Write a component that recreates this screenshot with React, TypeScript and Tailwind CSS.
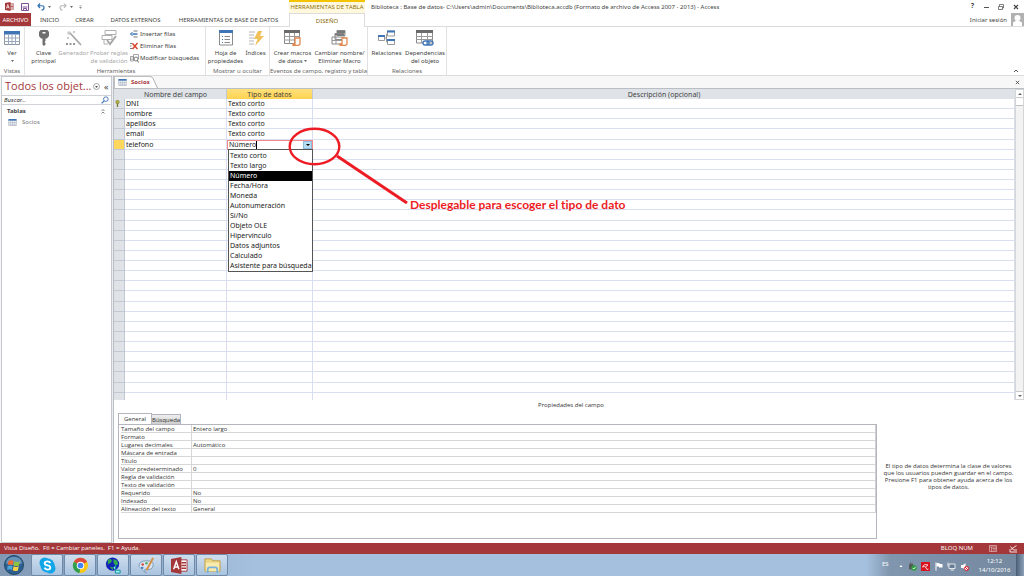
import { useState } from 'react';
import type { ReactNode } from 'react';

const fields = [
  { name: 'DNI', type: 'Texto corto', key: true },
  { name: 'nombre', type: 'Texto corto' },
  { name: 'apellidos', type: 'Texto corto' },
  { name: 'email', type: 'Texto corto' },
];

const dataTypes = [
  'Texto corto',
  'Texto largo',
  'Número',
  'Fecha/Hora',
  'Moneda',
  'Autonumeración',
  'Sí/No',
  'Objeto OLE',
  'Hipervínculo',
  'Datos adjuntos',
  'Calculado',
  'Asistente para búsqueda',
];

const properties = [
  ['Tamaño del campo', 'Entero largo'],
  ['Formato', ''],
  ['Lugares decimales', 'Automático'],
  ['Máscara de entrada', ''],
  ['Título', ''],
  ['Valor predeterminado', '0'],
  ['Regla de validación', ''],
  ['Texto de validación', ''],
  ['Requerido', 'No'],
  ['Indexado', 'No'],
  ['Alineación del texto', 'General'],
];

/* ---------- Iconos ---------- */

function AccessIcon({ className }: { className: string }) {
  return (
    <svg viewBox="0 0 18 18" className={className}>
      <path d="M10 3h7v12h-7z" fill="#fff" stroke="#a4373a" />
      <path d="M11 6h5M11 9h5M11 12h5" stroke="#a4373a" strokeWidth="1.6" />
      <path d="M0 2 11 0v18L0 16z" fill="#a4373a" />
      <path d="M2.8 13 5.6 5l2.8 8M3.8 10.6h3.6" fill="none" stroke="#fff" strokeWidth="1.5" />
    </svg>
  );
}

function TableIcon({ className }: { className: string }) {
  return (
    <svg viewBox="0 0 16 14" className={className}>
      <path d="M.5.5h15v13H.5z" fill="#fff" stroke="#8a93a3" />
      <path d="M0 0h16v3.500H0z" fill="#3f74b5" />
      <path d="M4.5 3.500V14M8 3.500V14M11.5 3.500V14M0 7h16M0 10.500h16" stroke="#9aa7bb" />
    </svg>
  );
}

function KeyIcon() {
  return (
    <svg viewBox="0 0 16 16" className="h-4 w-4">
      <path d="M4.500 0h7L13 2v4l-2 2.500H5L3 6V2z" fill="#6e6e6e" />
      <path d="M6.500 8h3v3l-1 1 1 1v1.500L8 16l-1.500-1.500z" fill="#6e6e6e" />
      <path d="M6.500 2h3v1.500h-3z" fill="#fff" />
    </svg>
  );
}

function WandIcon() {
  return (
    <svg viewBox="0 0 16 16" className="h-4 w-4">
      <path d="m4 3 11 12" stroke="#a8a8a8" strokeWidth="1.800" />
      <path d="M3 1v4M1 3h4M8 1v2M2 7v2M7 2h2M1 8h2" stroke="#b8b8b8" />
      <path d="M0 14h2M3.500 14h2M7 14h2" stroke="#777" strokeWidth="1.500" />
    </svg>
  );
}

function CheckRulesIcon() {
  return (
    <svg viewBox="0 0 16 16" className="h-4 w-4">
      <path d="M4 .5h11v4H4zM1 5.500h10v4H1z" fill="#fff" stroke="#b0b0b0" />
      <path d="M3 10v4h4" fill="none" stroke="#b0b0b0" />
      <path d="m6 10 3 4 6-8" fill="none" stroke="#a8a8a8" strokeWidth="2" />
    </svg>
  );
}

function InsertRowsIcon() {
  return (
    <svg viewBox="0 0 16 16" className="h-2 w-2">
      <path d="M7 2h8M7 14h8" stroke="#777" strokeWidth="2" />
      <path d="M6 8h9" stroke="#3f74b5" strokeWidth="3" />
      <path d="M5 4 1 8l4 4M1 8h5" fill="none" stroke="#3f74b5" strokeWidth="2" />
    </svg>
  );
}

function DeleteRowsIcon() {
  return (
    <svg viewBox="0 0 16 16" className="h-2 w-2">
      <path d="M0 3h5M0 8h3M0 13h5" stroke="#777" strokeWidth="2" />
      <path d="m5 3 10 11M15 2 5 14" stroke="#d8432b" strokeWidth="3" />
    </svg>
  );
}

function LookupIcon() {
  return (
    <svg viewBox="0 0 18 18" className="h-[9px] w-[9px]">
      <path d="M1 5h6v9H1zM7 1h10v9H7z" fill="#fff" stroke="#888" strokeWidth="1.500" />
      <path d="M1 8h5M1 11h5" stroke="#888" />
      <circle cx="12" cy="10" r="4" fill="#fff" stroke="#555" strokeWidth="1.500" />
      <path d="m14.500 13 3 4" stroke="#555" strokeWidth="2" />
    </svg>
  );
}

function SheetIcon() {
  return (
    <svg viewBox="0 0 14 16" className="h-4 w-[14px]">
      <path d="M.5.5h13v14.500H.5z" fill="#fff" stroke="#8b8b8b" />
      <path d="M0 0h14v3H0z" fill="#3f74b5" />
      <path d="M5.500 6.500H11M5.500 9.500H11M5.500 12.500H11" stroke="#8b8b8b" />
      <path d="M3 6.500h1M3 9.500h1M3 12.500h1" stroke="#3f74b5" />
    </svg>
  );
}

function IndexIcon() {
  return (
    <svg viewBox="0 0 16 16" className="h-4 w-4">
      <path d="M1 2h6M1 5h5M1 8h5M1 11h5M1 14h5" stroke="#b3b3b3" />
      <path d="M10 1h4l-2 5h4L7 16l2.500-7H6z" fill="#f0c05a" />
    </svg>
  );
}

function MacroIcon() {
  return (
    <svg viewBox="0 0 17 16" className="h-4 w-[17px]">
      <path d="M.5.5h15v13H.5z" fill="#fff" stroke="#888" />
      <path d="M0 0h16v3H0z" fill="#6a6a6a" />
      <path d="M5.500 3v11M10.500 3v11M0 6.500h16M0 10h16" stroke="#999" />
      <path d="M11 8h5v6l-1.500 1.500H9V14h2z" fill="#fff" stroke="#e2884f" strokeWidth="1.300" />
    </svg>
  );
}

function RenameMacroIcon() {
  return (
    <svg viewBox="0 0 17 16" className="h-4 w-[17px]">
      <path d="M6 .5h8v5H6zM4 3.500h9v6H4zM1 7h11v7H1z" fill="#fff" stroke="#888" />
      <path d="M6 1h8v2H6zM4 4h9v1.500H4z" fill="#777" />
      <path d="M1 10.500h11M5 7v7" stroke="#999" />
      <path d="M11 8h5v6l-1.500 1.500H9V14h2z" fill="#fff" stroke="#e2884f" strokeWidth="1.300" />
    </svg>
  );
}

function RelationsIcon() {
  return (
    <svg viewBox="0 0 17 16" className="h-4 w-[17px]">
      <path d="M.5 5.500h6v5h-6zM9.500 1h7v5h-7zM9.500 9.500h7v5h-7z" fill="#fff" stroke="#999" />
      <path d="M0 5h7v2H0zM9 .5h8v2H9zM9 9h8v2H9z" fill="#3f74b5" />
      <path d="M7 8h1.500V4H10M8.500 8v4H10" fill="none" stroke="#999" />
    </svg>
  );
}

function DependenciesIcon() {
  return (
    <svg viewBox="0 0 18 16" className="h-4 w-[18px]">
      <path d="M.5.5h16v12.500H.5z" fill="#fff" stroke="#888" />
      <path d="M0 0h17v3H0z" fill="#6a6a6a" />
      <path d="M5.500 3v10M11.500 3v10M0 6.500h17M0 9.500h17" stroke="#999" />
      <rect x="7" y="11" width="6" height="4" rx="2" fill="#fff" stroke="#3f74b5" strokeWidth="1.300" />
      <rect x="11" y="11" width="6" height="4" rx="2" fill="none" stroke="#3f74b5" strokeWidth="1.300" />
    </svg>
  );
}

/* ---------- Cinta de opciones ---------- */

function RibbonGroup({ label, className, children }: { label: string; className: string; children: ReactNode }) {
  return (
    <section className={`flex shrink-0 flex-col justify-between border-r border-[#e1e1e1] ${className}`}>
      <div className="flex h-[38px] justify-center">{children}</div>
      <h2 className="whitespace-nowrap text-center text-[6px] leading-[7px] text-[#666]">{label}</h2>
    </section>
  );
}

function RibbonButton({
  icon,
  lines,
  className,
  disabled,
}: {
  icon: ReactNode;
  lines: string[];
  className: string;
  disabled?: boolean;
}) {
  return (
    <button
      type="button"
      disabled={disabled}
      className={`flex shrink-0 flex-col items-center whitespace-nowrap text-[6px] leading-[8px] ${
        disabled ? 'text-[#a6a6a6]' : 'text-[#444]'
      } ${className}`}
    >
      <span className="mt-[3px] mb-[3px] flex h-4 justify-center">{icon}</span>
      {lines.map((line) => (
        <span key={line} className="flex h-2 items-center gap-px">
          {line === '▾' ? <DownArrow /> : line.replace(' ▾', '')}
          {line.endsWith(' ▾') && <DownArrow />}
        </span>
      ))}
    </button>
  );
}

function DownArrow() {
  return (
    <svg viewBox="0 0 6 4" className="h-[2px] w-[3px]">
      <path d="M0 0h6L3 4z" fill="#666" />
    </svg>
  );
}

function TitleBar() {
  return (
    <header className="flex h-[13px] items-stretch bg-white text-[6px] text-[#444]">
      <div className="flex w-[289px] shrink-0 items-center pl-[5px]">
        <AccessIcon className="h-[9px] w-[9px]" />
        <button type="button" aria-label="Guardar" className="ml-[7px]">
          <svg viewBox="0 0 16 16" className="h-2 w-2">
            <path d="M1 1h14v14H1z" fill="#fff" stroke="#80509a" strokeWidth="2" />
            <path d="M3 8h10M5 15v-4h6v4" fill="none" stroke="#80509a" strokeWidth="2" />
          </svg>
        </button>
        <button type="button" aria-label="Deshacer" className="ml-2 flex items-center gap-[3px]">
          <svg viewBox="0 0 16 16" className="h-2 w-2">
            <path d="M6 1 2 5.500 6 10M2 5.500h8q4 0 4 4t-5 5" fill="none" stroke="#2f6fb3" strokeWidth="2.400" />
          </svg>
          <DownArrow />
        </button>
        <button type="button" aria-label="Rehacer" className="ml-2 flex items-center gap-[3px]">
          <svg viewBox="0 0 16 16" className="h-2 w-2">
            <path d="m10 1 4 4.500L10 10M14 5.500H6q-4 0-4 4t5 5" fill="none" stroke="#b5b5b5" strokeWidth="2.200" />
          </svg>
          <DownArrow />
        </button>
        <button type="button" aria-label="Personalizar barra" className="ml-[6px]">
          <svg viewBox="0 0 6 8" className="h-1 w-[3px]">
            <path d="M1 1h4M1 4h4L3 7z" fill="#888" stroke="#888" />
          </svg>
        </button>
      </div>
      <div className="w-[76px] shrink-0 overflow-hidden whitespace-nowrap border-t-2 border-[#f5c400] bg-[#fff8dc] text-center leading-[10px] text-[#8a6a00] font-['Open_Sans',sans-serif]">
        HERRAMIENTAS DE TABLA
      </div>
      <h1 className="min-w-0 flex-1 truncate pl-[6px] leading-[14px]">
        Biblioteca : Base de datos- C:\Users\admin\Documents\Biblioteca.accdb (Formato de archivo de Access 2007 - 2013) -
        Access
      </h1>
      <div className="flex items-center gap-[9px] pr-[5px]">
        <button type="button" className="text-[7px] font-bold">?</button>
        <button type="button" aria-label="Minimizar">
          <svg viewBox="0 0 6 6" className="h-[6px] w-[6px]">
            <path d="M1 3.500h5" stroke="#555" />
          </svg>
        </button>
        <button type="button" aria-label="Restaurar">
          <svg viewBox="0 0 12 12" className="h-[6px] w-[6px]">
            <path d="M1 5h8v6H1zM3 5V1h8v7H9" fill="none" stroke="#555" strokeWidth="1.500" />
          </svg>
        </button>
        <button type="button" aria-label="Cerrar">
          <svg viewBox="0 0 6 6" className="h-[6px] w-[6px]">
            <path d="m1 1 4 4M5 1 1 5" stroke="#444" strokeWidth="1.200" />
          </svg>
        </button>
      </div>
    </header>
  );
}

function RibbonTabs() {
  return (
    <nav className="flex h-[14px] items-stretch text-[6px] leading-[14px] whitespace-nowrap text-[#444]">
      <div className="flex w-[289px] shrink-0 border-b border-[#dcdcdc]">
        <button type="button" className="w-[31px] bg-[#a4373a] text-white">ARCHIVO</button>
        <button type="button" className="w-[37px]">INICIO</button>
        <button type="button" className="w-[33px]">CREAR</button>
        <button type="button" className="w-[69px]">DATOS EXTERNOS</button>
        <button type="button" className="w-[117px]">HERRAMIENTAS DE BASE DE DATOS</button>
      </div>
      <button
        type="button"
        className="w-[76px] shrink-0 border-x border-t border-[#dcdcdc] bg-white leading-[12px] text-[#8a6a00]"
      >
        DISEÑO
      </button>
      <div className="flex flex-1 items-stretch justify-end gap-1 border-b border-[#dcdcdc]">
        <a href="#cuenta">Iniciar sesión</a>
        <svg viewBox="0 0 13 13" className="h-[13px] w-[13px]">
          <path d="M0 0h13v13H0z" fill="#b1b1b1" />
          <circle cx="6.500" cy="5" r="3" fill="#fff" />
          <path d="M2 13V9.500l2.500-1.500h4L11 9.500V13z" fill="#fff" />
        </svg>
      </div>
    </nav>
  );
}

function Ribbon() {
  return (
    <div className="flex h-[49px] items-stretch border-b border-[#dcdcdc] bg-white">
      <RibbonGroup label="Vistas" className="w-[25px]">
        <RibbonButton icon={<TableIcon className="h-4 w-4" />} lines={['Ver', '▾']} className="w-6" />
      </RibbonGroup>
      <RibbonGroup label="Herramientas" className="w-[181px] pl-[2px]">
        <RibbonButton icon={<KeyIcon />} lines={['Clave', 'principal']} className="w-[29px]" />
        <RibbonButton icon={<WandIcon />} lines={['Generador']} className="w-[31px]" disabled />
        <RibbonButton icon={<CheckRulesIcon />} lines={['Probar reglas', 'de validación']} className="w-10" disabled />
        <div className="flex w-[74px] flex-col pt-px pl-px text-[6px] leading-[12px] whitespace-nowrap text-[#444]">
          <button type="button" className="flex h-3 items-center gap-[2px]">
            <InsertRowsIcon />
            Insertar filas
          </button>
          <button type="button" className="flex h-3 items-center gap-[2px]">
            <DeleteRowsIcon />
            Eliminar filas
          </button>
          <button type="button" className="flex h-3 items-center gap-px">
            <LookupIcon />
            Modificar búsquedas
          </button>
        </div>
      </RibbonGroup>
      <RibbonGroup label="Mostrar u ocultar" className="w-16">
        <RibbonButton icon={<SheetIcon />} lines={['Hoja de', 'propiedades']} className="w-9" />
        <RibbonButton icon={<IndexIcon />} lines={['Índices']} className="w-6" />
      </RibbonGroup>
      <RibbonGroup label="Eventos de campo, registro y tabla" className="w-[98px]">
        <RibbonButton icon={<MacroIcon />} lines={['Crear macros', 'de datos ▾']} className="w-[42px]" />
        <RibbonButton icon={<RenameMacroIcon />} lines={['Cambiar nombre/', 'Eliminar Macro']} className="w-[52px]" />
      </RibbonGroup>
      <RibbonGroup label="Relaciones" className="w-[79px]">
        <RibbonButton icon={<RelationsIcon />} lines={['Relaciones']} className="w-9" />
        <RibbonButton icon={<DependenciesIcon />} lines={['Dependencias', 'del objeto']} className="w-[41px]" />
      </RibbonGroup>
      <div className="flex flex-1 items-end justify-end pr-[5px]">
        <button type="button" aria-label="Contraer la cinta">
          <svg viewBox="0 0 6 4" className="mb-[2px] h-1 w-[6px]">
            <path d="m1 3 2-2 2 2" fill="none" stroke="#555" />
          </svg>
        </button>
      </div>
    </div>
  );
}

/* ---------- Panel de navegación ---------- */

function NavigationPane() {
  return (
    <aside className="w-[111px] shrink-0 border border-[#c6c9ce] bg-white">
      <div className="flex h-[18px] items-center pl-[3px]">
        <h2 className="w-[88px] whitespace-nowrap text-[11px] leading-[18px] text-[#a4373a] font-['Open_Sans',sans-serif]">
          Todos los objet...
        </h2>
        <button type="button" aria-label="Opciones">
          <svg viewBox="0 0 14 14" className="h-[7px] w-[7px]">
            <circle cx="7" cy="7" r="6" fill="#fff" stroke="#888" strokeWidth="1.500" />
            <path d="M4 6h6l-3 4z" fill="#555" />
          </svg>
        </button>
        <button type="button" className="ml-1 text-[9px] leading-[9px] text-[#444]">«</button>
      </div>
      <div className="flex h-[10px] items-center border-y border-[#d0d3d8] pr-[2px] pl-[2px]">
        <input
          aria-label="Buscar"
          placeholder="Buscar..."
          className="h-2 min-w-0 flex-1 text-[6px] italic leading-[8px] outline-none placeholder:text-[#333]"
        />
        <svg viewBox="0 0 14 14" className="h-2 w-2">
          <circle cx="8.500" cy="5.500" r="4" fill="#fff" stroke="#3f74b5" strokeWidth="1.600" />
          <path d="m5.500 8.500-4.500 4.500" stroke="#3f74b5" strokeWidth="2.200" />
        </svg>
      </div>
      <div className="flex h-3 items-center justify-between pr-[6px] pl-[5px] text-[6px] font-bold text-[#444]">
        Tablas
        <svg viewBox="0 0 8 10" className="h-[5px] w-1">
          <path d="m1 4 3-3 3 3M1 9l3-3 3 3" fill="none" stroke="#555" strokeWidth="1.400" />
        </svg>
      </div>
      <a href="#socios" className="flex h-[10px] items-center gap-[5px] pl-[6px] text-[6px] text-[#777]">
        <TableIcon className="h-[7px] w-[9px]" />
        Socios
      </a>
    </aside>
  );
}

/* ---------- Hoja de diseño ---------- */

function TypeList({ value, onChange }: { value: string; onChange: (v: string) => void }) {
  return (
    <ul
      role="listbox"
      aria-label="Tipos de datos"
      className="absolute top-full left-0 z-10 w-[85px] border border-[#555] bg-white pt-px"
    >
      {dataTypes.map((type) => (
        <li
          key={type}
          role="option"
          aria-selected={type === value}
          onClick={() => onChange(type)}
          className={`whitespace-nowrap pl-px text-[7px] leading-[10px] ${
            type === value ? 'bg-black text-white' : 'text-[#222]'
          }`}
        >
          {type}
        </li>
      ))}
    </ul>
  );
}

function DesignGrid() {
  const [type, setType] = useState('Número');
  const emptyRows = Array.from({ length: 25 }, (_, i) => i);
  const cell = 'border-r border-b border-[#d9dff0] p-0';
  const textCell = 'border-r border-b border-[#d9dff0] p-0 pt-px pl-px leading-[8px]';
  const selector = 'border-r border-b border-[#c3c9d2] bg-[#dfe3e8] p-0';

  return (
    <div className="flex h-[311px] shrink-0">
      <div className="min-w-0 flex-1 overflow-hidden">
        <table className="h-[314px] w-full table-fixed border-separate border-spacing-0 text-[7px] leading-[9px] text-[#222]">
          <colgroup>
            <col className="w-[11px]" />
            <col className="w-[102px]" />
            <col className="w-[86px]" />
            <col />
          </colgroup>
          <thead>
            <tr className="h-[10px] bg-[#dfe3e8] text-[#444]">
              <th className="p-0" />
              <th className="border-r border-[#c3c9d2] p-0 font-normal">Nombre del campo</th>
              <th className="border-r border-[#c3c9d2] bg-linear-to-b from-[#ffe07a] to-[#ffd34f] p-0 font-normal">
                Tipo de datos
              </th>
              <th className="p-0 font-normal">Descripción (opcional)</th>
            </tr>
          </thead>
          <tbody>
            {fields.map((field) => (
              <tr key={field.name} className="h-[10px]">
                <td className={selector}>
                  {field.key && (
                    <svg viewBox="0 0 8 12" className="ml-px h-[7px] w-[5px]">
                      <circle cx="4" cy="3.500" r="3" fill="#b9b441" stroke="#77762a" />
                      <path d="M4 6v6" stroke="#77762a" strokeWidth="2.200" />
                    </svg>
                  )}
                </td>
                <td className={textCell}>{field.name}</td>
                <td className={textCell}>{field.type}</td>
                <td className={cell} />
              </tr>
            ))}
            <tr className="h-[10px]">
              <td className="border-r border-b border-[#c3c9d2] bg-[#ffd75e] p-0" />
              <td className={textCell}>telefono</td>
              <td className="relative border border-[#f08a8a] p-0">
                <div className="flex h-2 items-stretch">
                  <div className="flex flex-1 items-center">
                    <select
                      aria-label="Tipo de datos"
                      value={type}
                      onChange={(e) => setType(e.target.value)}
                      className="field-sizing-content h-2 appearance-none pl-px text-[7px] leading-[8px] outline-none"
                    >
                      {dataTypes.map((t) => (
                        <option key={t}>{t}</option>
                      ))}
                    </select>
                    <span className="h-2 w-px bg-black" />
                  </div>
                  <button
                    type="button"
                    aria-label="Abrir lista"
                    className="flex w-[9px] items-center justify-center border border-[#8fbcdc] bg-[#b5dcf3]"
                  >
                    <svg viewBox="0 0 4 2" className="h-[2px] w-1">
                      <path d="M0 0h4L2 2z" fill="#000" />
                    </svg>
                  </button>
                </div>
                <TypeList value={type} onChange={setType} />
              </td>
              <td className={cell} />
            </tr>
            {emptyRows.map((i) => (
              <tr key={i} className="h-[10px]">
                <td className={selector} />
                <td className={cell} />
                <td className={cell} />
                <td className={cell} />
              </tr>
            ))}
          </tbody>
        </table>
      </div>
      <div className="flex w-[9px] shrink-0 flex-col border border-[#d5d5d5] bg-[#f3f3f3]">
        <button type="button" aria-label="Subir" className="flex h-2 items-center justify-center border-b border-[#c9c9c9] bg-white">
          <svg viewBox="0 0 4 2" className="h-[2px] w-1">
            <path d="M0 2h4L2 0z" fill="#666" />
          </svg>
        </button>
        <div className="h-2 border-b border-[#c0c0c0] bg-white" />
        <div className="flex-1" />
        <button type="button" aria-label="Bajar" className="flex h-2 items-center justify-center border-t border-[#c9c9c9] bg-white">
          <svg viewBox="0 0 4 2" className="h-[2px] w-1">
            <path d="M0 0h4L2 2z" fill="#666" />
          </svg>
        </button>
      </div>
    </div>
  );
}

function Annotation() {
  return (
    <div className="pointer-events-none absolute top-[51px] left-[174px] z-20 flex">
      <svg viewBox="0 0 122 80" className="h-20 w-[122px] shrink-0" fill="none" stroke="#ed1c24">
        <ellipse cx="26.500" cy="19.500" rx="24.800" ry="17.800" strokeWidth="2.400" />
        <path d="m49 29 70 47" strokeWidth="3" />
      </svg>
      <p className="mt-[71px] whitespace-nowrap text-[12px] leading-[14px] font-bold text-[#ed1c24] [font-variant-ligatures:none] font-['Lato',sans-serif]">
        Desplegable para escoger el tipo de dato
      </p>
    </div>
  );
}

/* ---------- Propiedades del campo ---------- */

function FieldProperties() {
  return (
    <section className="flex flex-1 flex-col pb-1 pl-1 text-[6px] text-[#333] font-['Open_Sans',sans-serif]">
      <h2 className="text-center leading-[10px]">Propiedades del campo</h2>
      <div className="mt-[3px] flex h-[11px] items-end">
        <button type="button" className="h-[11px] w-[34px] border border-b-0 border-[#b5b5bd] bg-white leading-[10px]">
          General
        </button>
        <button
          type="button"
          className="h-[10px] w-[29px] border border-b-0 border-l-0 border-[#b5b5bd] bg-linear-to-b from-[#efefef] to-[#cfcfcf] leading-[10px]"
        >
          Búsqueda
        </button>
      </div>
      <div className="flex flex-1">
        <div className="flex-1 border border-[#b5b5bd] pl-[2px]">
          <table className="w-full table-fixed border-separate border-spacing-0 border-r border-[#d0d0d0] leading-[7px]">
            <colgroup>
              <col className="w-[71px]" />
              <col />
            </colgroup>
            <tbody>
              {properties.map(([name, value]) => (
                <tr key={name} className="h-2">
                  <th className="whitespace-nowrap border-r border-b border-[#d6d6d6] p-0 pt-px text-left leading-[6px] font-normal">
                    {name}
                  </th>
                  <td className="border-b border-[#d6d6d6] p-0 pt-px pl-px leading-[6px]">{value}</td>
                </tr>
              ))}
            </tbody>
          </table>
        </div>
        <div className="flex w-[147px] shrink-0 items-center justify-center pr-1 pb-[10px]">
          <p className="w-[134px] text-center leading-[7px]">
            El tipo de datos determina la clase de valores que los usuarios pueden guardar en el campo. Presione F1 para
            obtener ayuda acerca de los tipos de datos.
          </p>
        </div>
      </div>
    </section>
  );
}

function DesignView() {
  return (
    <main className="relative flex min-w-0 flex-1 flex-col bg-white">
      <div className="flex h-[13px] items-stretch justify-between border-b border-[#b9bdc4] bg-[#f7f7f7] pr-1">
        <div className="flex">
          <div className="flex items-center gap-1 border-t border-l border-[#c0c0c0] bg-white pl-[3px] text-[6px] font-bold text-[#a4373a] font-['Open_Sans',sans-serif]">
            <TableIcon className="h-[7px] w-[9px]" />
            <h2>Socios</h2>
          </div>
          <svg viewBox="0 0 8 12" className="h-3 w-2">
            <path d="M0 .5 2 1l5 11H0z" fill="#fff" />
            <path d="M0 .5q2 0 3 2L7.500 12" fill="none" stroke="#b0b0b0" />
          </svg>
        </div>
        <button type="button" aria-label="Cerrar tabla">
          <svg viewBox="0 0 6 6" className="h-[5px] w-[5px]">
            <path d="m1 1 4 4M5 1 1 5" stroke="#444" />
          </svg>
        </button>
      </div>
      <DesignGrid />
      <FieldProperties />
      <Annotation />
    </main>
  );
}

/* ---------- Barras inferiores ---------- */

function StatusBar() {
  return (
    <footer className="flex h-[11px] items-center bg-[#a4373a] pr-[6px] pl-1 text-[6px] leading-[11px] text-white font-['Open_Sans',sans-serif]">
      <p className="flex-1">Vista Diseño.&nbsp; F6 = Cambiar paneles.&nbsp; F1 = Ayuda.</p>
      <p className="mr-4">BLOQ NUM</p>
      <button type="button" aria-label="Vista Hoja de datos" className="mr-3">
        <svg viewBox="0 0 16 14" className="h-[7px] w-2">
          <path d="M1 1h14v12H1zM1 4h14M5 4v9M7 7h7M7 10h7" fill="none" stroke="#e5b9ba" strokeWidth="1.400" />
        </svg>
      </button>
      <button type="button" aria-label="Vista Diseño">
        <svg viewBox="0 0 18 16" className="h-2 w-[9px]">
          <path d="M2 8v6h14M4 9 15 1M3 3l6 7h7" fill="none" stroke="#fff" strokeWidth="1.700" />
        </svg>
      </button>
    </footer>
  );
}

function TaskButton({ label, children }: { label: string; children: ReactNode }) {
  return (
    <button
      type="button"
      aria-label={label}
      className="flex w-8 items-center justify-center rounded-[2px] border border-[#6f8aa8] bg-linear-to-b from-[#cfdeee] to-[#a9c3df]"
    >
      {children}
    </button>
  );
}

function Taskbar() {
  return (
    <div className="flex h-[22px] items-stretch bg-linear-to-r from-[#8199b4] via-[#a5c0df] via-25% to-[#a5c0df] text-white">
      <button type="button" aria-label="Inicio" className="mr-[3px] flex w-7 items-center justify-center">
        <svg viewBox="0 0 22 22" className="h-5 w-5">
          <circle cx="11" cy="11" r="10.500" fill="#2c5f8f" stroke="#244765" />
          <path d="M2 9a9.300 9.300 0 0 1 18 0q-9 4-18 0z" fill="#7fa9c8" opacity=".7" />
          <path d="M5 6.500q3-1.500 5.500 0l-1 4.500q-3-1-5.500 0z" fill="#ee6b31" />
          <path d="M11.500 7q3 1.500 6 0l-1 4.500q-3 1.200-6 0z" fill="#92c33e" />
          <path d="M4 12q3-1 5.500 0l-1 4.500q-2.500-1.500-5 0z" fill="#4aa6dc" />
          <path d="M10.500 12.500q3 1.200 5.800 0l-1 4.500q-3 1.500-5.800-.2z" fill="#fbd144" />
        </svg>
      </button>
      <div className="flex gap-px">
        <TaskButton label="Skype">
          <svg viewBox="0 0 18 18" className="h-[17px] w-[17px]">
            <circle cx="6" cy="6" r="5.500" fill="#12a5e8" />
            <circle cx="12" cy="12" r="5.500" fill="#12a5e8" />
            <circle cx="9" cy="9" r="7.500" fill="#12a5e8" />
            <path d="M12 6.500q-1-1.800-3-1.800c-4 0-4 3.600 0 4.200s4 4.400 0 4.400q-2.400 0-3.200-2" fill="none" stroke="#fff" strokeWidth="1.900" />
          </svg>
        </TaskButton>
        <TaskButton label="Chrome">
          <svg viewBox="0 0 18 18" className="h-[17px] w-[17px]">
            <circle cx="9" cy="9" r="8" fill="#fbc817" />
            <path d="M9 9 2 5a8 8 0 0 1 14 0z" fill="#dd4b3e" />
            <path d="M9 9 2 5a8 8 0 0 0 6 12z" fill="#2f9e4f" />
            <circle cx="9" cy="9" r="4" fill="#fff" />
            <circle cx="9" cy="9" r="3" fill="#4285f4" />
          </svg>
        </TaskButton>
        <TaskButton label="Navegador">
          <svg viewBox="0 0 18 18" className="h-[17px] w-[17px]">
            <circle cx="8" cy="7.500" r="7" fill="#1320b8" />
            <path d="M3 3q3-2 4 0t-1 3-3 2zM9 2l4 2 1 4-3 1-2-3zM5 10l4 1-1 3z" fill="#2fa84e" />
            <path d="M11 14V9l-2 2M11 9l2 2M11 14h5v3h-5z" fill="#9ff5f5" stroke="#0a8e9b" />
          </svg>
        </TaskButton>
        <TaskButton label="Paint">
          <svg viewBox="0 0 18 18" className="h-[17px] w-[17px]">
            <path d="M1 10q0-6 8-6t7 5-6 4-2 3-7-6z" fill="#d7e5f2" stroke="#7c97b3" />
            <circle cx="5" cy="8" r="1.300" fill="#d8433a" />
            <circle cx="9" cy="6.500" r="1.300" fill="#4aa95a" />
            <circle cx="4.500" cy="11.500" r="1.300" fill="#3c79c4" />
            <path d="M16 1 9 14" stroke="#d58f42" strokeWidth="2" />
          </svg>
        </TaskButton>
        <TaskButton label="Access">
          <AccessIcon className="h-[17px] w-[17px]" />
        </TaskButton>
        <TaskButton label="Explorador">
          <svg viewBox="0 0 18 18" className="h-[17px] w-[17px]">
            <path d="M1 2h7l1 2h8v11H1z" fill="#edd586" stroke="#bf9f4a" />
            <path d="M2 6h14v9H2z" fill="#f8e9ad" />
            <path d="M4 17v-4q0-2 2-2h6q2 0 2 2v4" fill="none" stroke="#79b3dc" strokeWidth="2" />
          </svg>
        </TaskButton>
      </div>
      <div className="flex-1" />
      <div className="flex w-[158px] shrink-0 bg-linear-to-r from-[#a5c0df] via-[#8096ae] via-15% to-[#74889f] pl-[16px] text-[6px]">
        <span className="w-[17px] pt-[6px] leading-[8px]">ES</span>
        <div className="flex items-center gap-1 pt-[2px]">
          <svg viewBox="0 0 6 4" className="mr-px h-[2px] w-1">
            <path d="M0 4h6L3 0z" fill="#fff" />
          </svg>
          <svg viewBox="0 0 18 18" className="h-[9px] w-[9px]">
            <path d="M3 5h7v9H3zM5 1v4M8 1v4" fill="#555" stroke="#555" strokeWidth="1.500" />
            <circle cx="12" cy="12" r="5.500" fill="#2ea043" />
            <path d="m9.500 12 2 2 3.500-4" fill="none" stroke="#fff" strokeWidth="1.800" />
          </svg>
          <svg viewBox="0 0 18 18" className="h-[9px] w-[9px]">
            <path d="M0 0h18v18H0z" fill="#d9141e" />
            <path d="M3 10q3-7 11-4M3 10l4-1 2 1 5-4M9 10l3 5 3-1" fill="none" stroke="#fff" strokeWidth="1.600" />
          </svg>
          <svg viewBox="0 0 18 18" className="h-[9px] w-[9px]">
            <path d="M4 1v16" stroke="#fff" strokeWidth="2" />
            <path d="M5 2h6v2h6v7h-7V9H5z" fill="#fff" />
          </svg>
          <svg viewBox="0 0 18 18" className="h-[9px] w-[9px]">
            <path d="M4 4h12v9H4zM7 16h7M2 1v8" fill="#667c93" stroke="#fff" strokeWidth="1.600" />
          </svg>
          <svg viewBox="0 0 18 18" className="h-[9px] w-[9px]">
            <path d="M2 6h4l5-4v14l-5-4H2z" fill="#fff" />
            <circle cx="13" cy="13" r="4" fill="#fff" stroke="#d9141e" strokeWidth="2" />
            <path d="m10 10 6 6" stroke="#d9141e" strokeWidth="2" />
          </svg>
        </div>
        <div className="flex-1 pt-[3px] pl-1 text-center leading-[9px]">
          <p>12:12</p>
          <p>14/10/2016</p>
        </div>
        <button type="button" aria-label="Mostrar escritorio" className="w-2 border-l border-[#4d6075] bg-linear-to-r from-[#53677e] to-[#8da1b8]" />
      </div>
    </div>
  );
}

export default function App() {
  return (
    <div className="flex h-screen flex-col overflow-hidden bg-white font-['Noto_Sans',sans-serif]">
      <TitleBar />
      <RibbonTabs />
      <Ribbon />
      <div className="flex min-h-0 flex-1 bg-[#f7f7f7] pl-px">
        <NavigationPane />
        <div className="w-[2px] shrink-0 border-r border-[#b9bdc4] bg-[#eceef1]" />
        <DesignView />
      </div>
      <StatusBar />
      <Taskbar />
    </div>
  );
}
